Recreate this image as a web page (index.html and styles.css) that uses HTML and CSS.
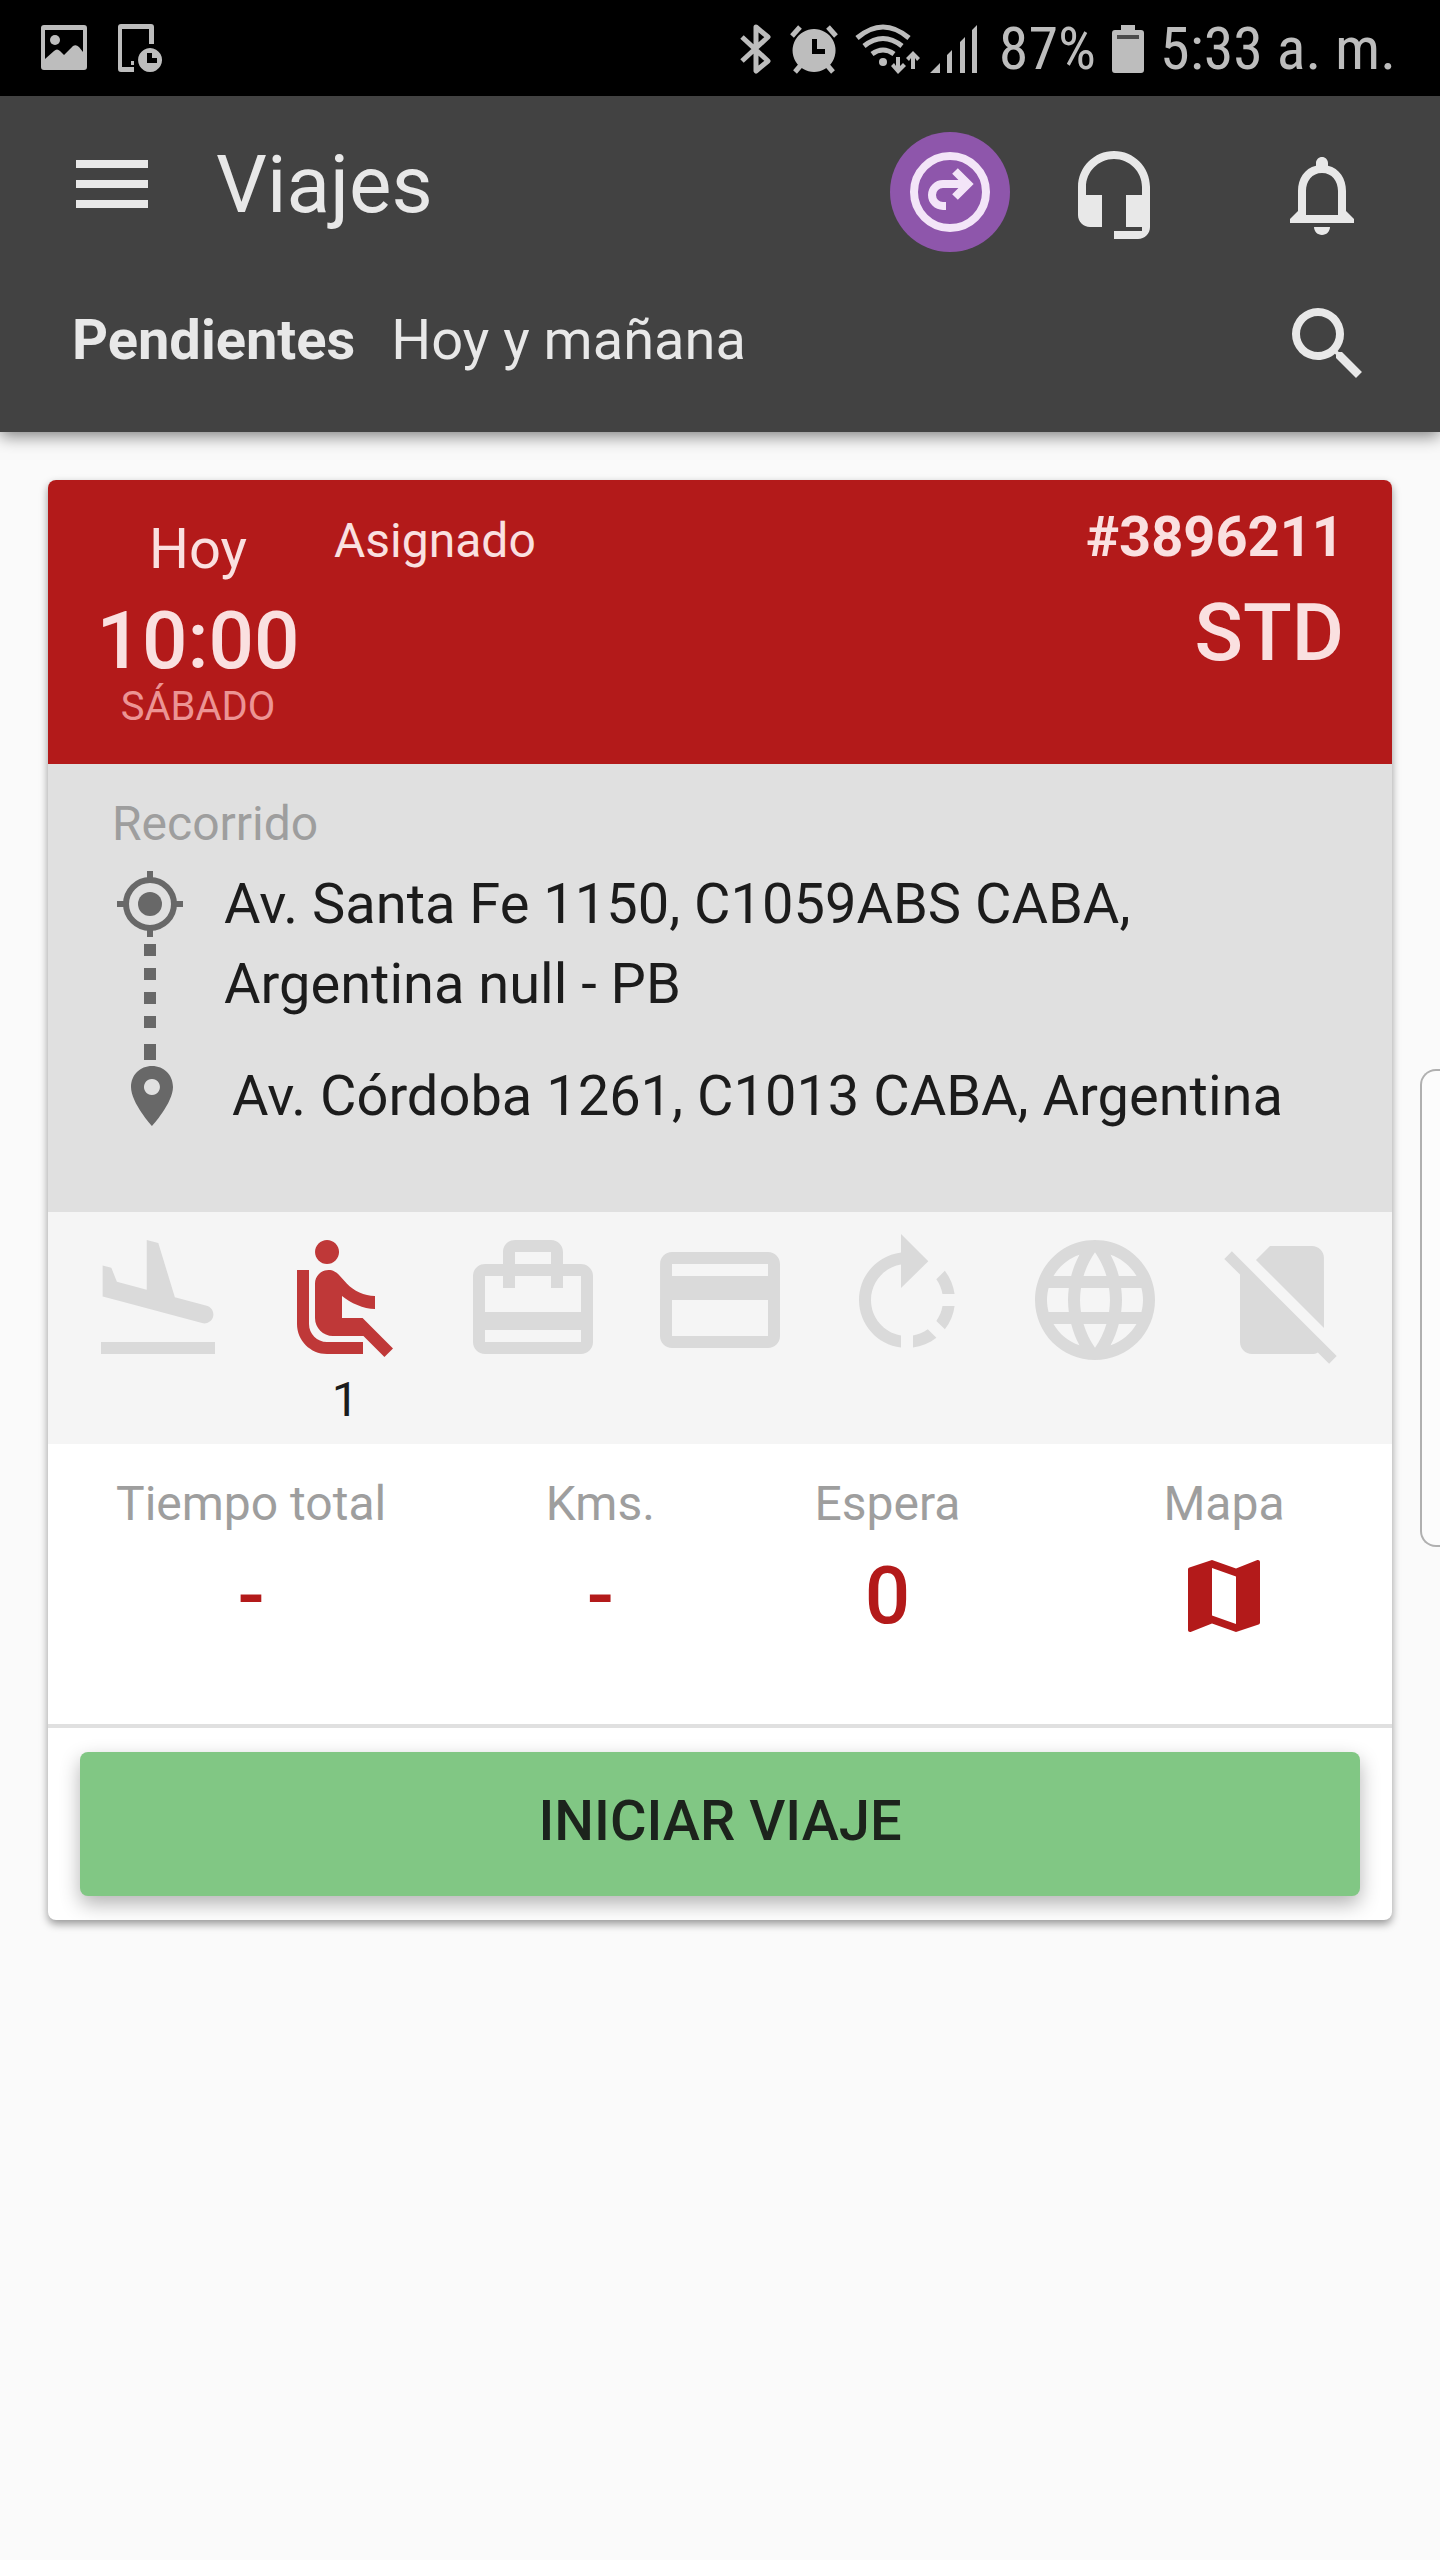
FILE: index.html
```html
<!DOCTYPE html>
<html lang="es">
<head>
<meta charset="utf-8">
<meta name="viewport" content="width=device-width, initial-scale=1">
<title>Viajes</title>
<link rel="stylesheet" href="styles.css">
</head>
<body>
<div class="status-bar">
  <div class="status-notes">
    <svg width="48" height="48" viewBox="0 0 48 48" aria-hidden="true"><path fill-rule="evenodd" d="M4 1h40q3 0 3 3v39q0 3-3 3H4q-3 0-3-3V4q0-3 3-3zm1 5v29l9-8q3-3 6 0l4 4 9-9q3-2 6 1l4 5V6z"/><circle cx="15" cy="16" r="5"/></svg>
    <svg width="48" height="50" viewBox="0 0 48 50" aria-hidden="true"><path d="M5 1h30q3 0 3 3v17h-5V6H6v38h12v5H5q-3 0-3-3V4q0-3 3-3zM15 38h3v4h-3z"/><path fill-rule="evenodd" d="M34 25a12 12 0 1 0 .1 0zm-3 5h5v5h5v5H31z"/></svg>
  </div>
  <div class="status-info">
    <svg width="34" height="52" viewBox="0 0 34 52" aria-hidden="true"><path fill="none" stroke="#bdbdbd" stroke-width="5" stroke-linejoin="round" d="M3 14l26 24-12 10V4l12 10L3 38"/></svg>
    <svg class="alarm" width="50" height="50" viewBox="0 0 50 50" aria-hidden="true"><path fill-rule="evenodd" d="M25 5a21.500 21.500 0 1 0 .1 0zm-2 10h5v10h8v5H23z"/><path d="M3 12L11 3M47 12L39 3M6 48l6-7M44 48l-6-7" stroke="#bdbdbd" stroke-width="5"/></svg>
    <svg class="wifi" width="66" height="50" viewBox="0 0 66 50" aria-hidden="true"><path fill="none" stroke="#bdbdbd" stroke-width="5" d="M2 14q26-22 52 0M9 22q19-15 38 0M17 30q11-8 22 0"/><circle cx="28" cy="38" r="4"/><path d="M41 33h4v9l3-3 3 3-8 8-7-8 3-3 2 3zM56 45V34l-2 3-3-3 7-7 7 7-3 3-2-3v11z"/></svg>
    <svg class="signal" width="50" height="50" viewBox="0 0 50 50" aria-hidden="true"><path d="M1 49l10-10v10zM18 49V31l5-5v23zM31 49V18l5-5v36zM43 49V6l5-5v48z"/></svg>
    <span>87%</span>
    <svg class="battery" width="32" height="50" viewBox="0 0 32 50" aria-hidden="true"><path d="M9 1h14v5h6q3 0 3 3v37q0 3-3 3H3q-3 0-3-3V9q0-3 3-3h6z"/><path fill="#4c4c4c" d="M5 11h22v4H5z"/></svg>
    <span>5:33 a. m.</span>
  </div>
</div>
<header class="toolbar">
  <div class="toolbar-row">
    <button class="icon-button" aria-label="Menú"><svg viewBox="0 0 24 24"><path d="M3 18h18v-2H3v2zm0-5h18v-2H3v2zm0-7v2h18V6H3z"/></svg></button>
    <h1>Viajes</h1>
    <div class="toolbar-actions">
      <button class="round-button" aria-label="Derivar"><svg viewBox="0 0 120 120"><g fill="none" stroke="#f3e5f8" stroke-width="8"><circle cx="60" cy="60" r="36"/><path d="M56 74h-3a11 11 0 0 1 0-22h24M65 39l13 13-13 13"/></g></svg></button>
      <button class="icon-button" aria-label="Soporte"><svg viewBox="0 0 24 24"><path d="M12 1c-4.97 0-9 4.03-9 9v7c0 1.66 1.34 3 3 3h3v-8H5v-2c0-3.87 3.13-7 7-7s7 3.13 7 7v2h-4v8h4v1h-7v2h6c1.66 0 3-1.34 3-3V10c0-4.97-4.03-9-9-9z"/></svg></button>
      <button class="icon-button bell" aria-label="Notificaciones"><svg viewBox="0 0 24 24"><path d="M12 22c1.1 0 2-.9 2-2h-4c0 1.1.9 2 2 2zm6-6v-5c0-3.07-1.63-5.64-4.5-6.32V4c0-.83-.67-1.5-1.5-1.5s-1.5.67-1.5 1.5v.68C7.64 5.36 6 7.92 6 11v5l-2 2v1h16v-1l-2-2zm-2 1H8v-6c0-2.48 1.51-4.5 4-4.5s4 2.02 4 4.5v6z"/></svg></button>
    </div>
  </div>
  <div class="filter-row">
    <p><strong>Pendientes</strong><span>Hoy y mañana</span></p>
    <button class="icon-button" aria-label="Buscar"><svg viewBox="0 0 24 24"><path d="M15.500 14h-.79l-.28-.27A6.471 6.471 0 0 0 16 9.500 6.500 6.500 0 1 0 9.500 16c1.610 0 3.090-.59 4.230-1.570l.27.28v.79l5 4.990L20.490 19l-4.990-5zm-6 0C7.010 14 5 11.990 5 9.500S7.010 5 9.500 5 14 7.010 14 9.500 11.990 14 9.500 14z"/></svg></button>
  </div>
</header>
<main>
  <article class="trip">
    <div class="trip-head">
      <div class="trip-when"><span>Hoy</span><time datetime="10:00">10:00</time><small>SÁBADO</small></div>
      <p class="trip-state">Asignado</p>
      <div class="trip-id"><strong>#3896211</strong><span>STD</span></div>
    </div>
    <section class="route">
      <h2>Recorrido</h2>
      <div class="route-body">
        <svg class="route-line" width="68" height="260" viewBox="0 0 68 260" aria-hidden="true"><circle cx="34" cy="34" r="24" fill="none" stroke="#686868" stroke-width="6"/><circle cx="34" cy="34" r="12"/><path d="M31 1h6v8h-6zM31 59h6v8h-6zM1 31h8v6H1zM59 31h8v6h-8zM28 74h12v12H28zM28 98h12v12H28zM28 122h12v12H28zM28 146h12v12H28zM28 174h12v16H28z"/><path fill-rule="evenodd" d="M36 196c-12 0-21 9-21 21 0 16 21 39 21 39s21-23 21-39c0-12-9-21-21-21zm0 13a8 8 0 1 1-.1 0z"/></svg>
        <div class="stops"><p>Av. Santa Fe 1150, C1059ABS CABA, Argentina null - PB</p><p class="stop-end">Av. Córdoba 1261, C1013 CABA, Argentina</p></div>
      </div>
    </section>
    <ul class="extras">
      <li><svg viewBox="0 0 24 24"><path d="M2.500 19h19v2h-19zm7.180-5.730l4.350 1.160 5.310 1.420c.8.210 1.620-.26 1.840-1.060.21-.8-.26-1.620-1.060-1.840l-5.310-1.420-2.760-9.020L10.120 2v8.280L5.150 8.950l-.93-2.320-1.450-.39v5.170l1.600.43 5.310 1.430z"/></svg></li>
      <li class="on"><svg viewBox="0 0 24 24"><path d="M7.590 5.410c-.78-.78-.78-2.050 0-2.830.78-.78 2.050-.78 2.830 0 .78.78.78 2.050 0 2.830-.79.79-2.050.79-2.830 0zM6 16V7H4v9c0 2.760 2.240 5 5 5h6v-2H9c-1.660 0-3-1.340-3-3zm14 4.070L14.930 15H11.500v-3.680c1.400 1.150 3.600 2.160 5.500 2.160v-2.160c-1.660.02-3.610-.87-4.670-2.040l-1.400-1.550c-.19-.21-.43-.38-.69-.5-.29-.14-.62-.23-.96-.23h-.03C8.010 7 7 8.010 7 9.250V15c0 1.660 1.340 3 3 3h5.070l3.500 3.500L20 20.070z"/></svg><span>1</span></li>
      <li><svg viewBox="0 0 24 24"><path d="M20 6h-3V4c0-1.110-.89-2-2-2H9c-1.110 0-2 .89-2 2v2H4c-1.110 0-2 .89-2 2v11c0 1.110.89 2 2 2h16c1.110 0 2-.89 2-2V8c0-1.110-.89-2-2-2zM9 4h6v2H9V4zm11 15H4v-2h16v2zm0-5H4V8h3v2h2V8h6v2h2V8h3v6z"/></svg></li>
      <li><svg viewBox="0 0 24 24"><path d="M20 4H4c-1.110 0-1.990.89-1.990 2L2 18c0 1.110.89 2 2 2h16c1.110 0 2-.89 2-2V6c0-1.110-.89-2-2-2zm0 14H4v-6h16v6zm0-10H4V6h16v2z"/></svg></li>
      <li><svg viewBox="0 0 24 24"><path d="M15.550 5.550L11 1v3.070C7.060 4.560 4 7.920 4 12s3.050 7.440 7 7.930v-2.020c-2.840-.48-5-2.940-5-5.910s2.160-5.430 5-5.910V10l4.550-4.450zM19.930 11c-.17-1.390-.72-2.730-1.620-3.890l-1.420 1.420c.54.75.88 1.600 1.020 2.470h2.020zM13 17.900v2.020c1.390-.17 2.740-.71 3.900-1.610l-1.440-1.440c-.75.54-1.590.89-2.460 1.030zm3.890-2.420l1.420 1.410c.9-1.160 1.450-2.500 1.620-3.890h-2.020c-.14.87-.48 1.720-1.020 2.480z"/></svg></li>
      <li><svg viewBox="0 0 24 24"><path d="M11.990 2C6.470 2 2 6.480 2 12s4.470 10 9.990 10C17.520 22 22 17.520 22 12S17.520 2 11.990 2zm6.930 6h-2.950c-.32-1.250-.78-2.450-1.380-3.560 1.840.63 3.370 1.910 4.330 3.560zM12 4.040c.83 1.200 1.480 2.530 1.910 3.960h-3.820c.43-1.430 1.080-2.760 1.910-3.960zM4.260 14C4.100 13.360 4 12.690 4 12s.1-1.360.26-2h3.380c-.08.66-.14 1.320-.14 2s.06 1.340.14 2H4.260zm.82 2h2.950c.32 1.250.78 2.450 1.380 3.560-1.840-.63-3.370-1.900-4.330-3.560zm2.950-8H5.080c.96-1.660 2.490-2.930 4.330-3.560C8.810 5.550 8.350 6.750 8.030 8zM12 19.960c-.83-1.200-1.480-2.530-1.910-3.960h3.820c-.43 1.430-1.080 2.760-1.910 3.960zM14.340 14H9.660c-.09-.66-.16-1.320-.16-2s.07-1.350.16-2h4.680c.09.65.16 1.320.16 2s-.07 1.340-.16 2zm.25 5.560c.6-1.110 1.060-2.310 1.380-3.560h2.950c-.96 1.650-2.490 2.930-4.330 3.560zM16.360 14c.08-.66.14-1.320.14-2s-.06-1.340-.14-2h3.380c.16.64.26 1.310.26 2s-.1 1.360-.26 2h-3.380z"/></svg></li>
      <li><svg viewBox="0 0 24 24"><path d="M18.990 5c0-1.100-.89-2-1.990-2h-7L7.660 5.340 19 16.680 18.990 5zM3.650 3.880L2.380 5.150 5 7.770V19c0 1.100.9 2 2 2h10.010c.35 0 .67-.1.96-.26l1.880 1.880 1.270-1.270L3.650 3.880z"/></svg></li>
    </ul>
    <dl class="stats">
      <div><dt>Tiempo total</dt><dd>-</dd></div>
      <div><dt>Kms.</dt><dd>-</dd></div>
      <div><dt>Espera</dt><dd>0</dd></div>
      <div class="map"><dt>Mapa</dt><dd><a href="#mapa" aria-label="Mapa"><svg viewBox="0 0 24 24"><path d="M20.500 3l-.16.03L15 5.100 9 3 3.360 4.900c-.21.07-.36.25-.36.48V20.500c0 .28.22.5.5.5l.16-.03L9 18.900l6 2.100 5.640-1.900c.21-.07.36-.25.36-.48V3.500c0-.28-.22-.5-.5-.5zM15 19l-6-2.110V5l6 2.110V19z"/></svg></a></dd></div>
    </dl>
    <div class="trip-action"><button class="start">INICIAR VIAJE</button></div>
  </article>
</main>
<div class="edge-handle"></div>
</body>
</html>
```
FILE: styles.css
```css
* { box-sizing: border-box; }
body { margin: 0; background: #fafafa; color: #1c1c1c; font: 400 56px/80px Roboto, sans-serif; }
h1, h2, p, ul, dl, dd { margin: 0; padding: 0; font-weight: 400; }
button { border: 0; padding: 0; background: none; font: inherit; color: inherit; cursor: pointer; }
svg { display: block; flex: none; fill: currentColor; }

.status-bar { height: 96px; padding: 0 44px 0 40px; display: flex; justify-content: space-between; align-items: center; background: #000; color: #bdbdbd; font-size: 60px; font-family: "Roboto Condensed", Roboto, sans-serif; }
.status-notes, .status-info { display: flex; align-items: center; }
.status-notes { gap: 28px; }
.status-info { padding-top: 2px; }
.alarm { margin-left: 16px; }
.wifi { margin-left: 16px; }
.signal { margin: 0 20px 0 8px; }
.battery { margin: 0 16px; }

.toolbar { position: relative; background: #424242; color: #e8e8e8; box-shadow: 0 4px 16px rgba(0, 0, 0, .5); padding: 36px 64px 40px; }
.toolbar-row, .filter-row, .toolbar-actions { display: flex; align-items: center; }
.toolbar-row { height: 120px; padding-right: 6px; }
.toolbar-row > .icon-button { margin-top: -16px; }
.toolbar h1 { font-size: 80px; margin: -14px 0 0 56px; }
.toolbar-actions { margin-left: auto; }
.toolbar-actions .icon-button { margin-top: 6px; }
.icon-button svg { width: 96px; height: 96px; }
.round-button { width: 120px; height: 120px; margin-right: 56px; border-radius: 50%; background: #8e56ab; }
.bell { margin-left: 112px; }
.filter-row { justify-content: space-between; align-items: flex-start; height: 96px; margin-top: 44px; padding-left: 8px; }
.filter-row p { display: flex; gap: 36px; padding-top: 4px; }

main { padding: 48px; }
.trip { background: #fff; border-radius: 8px; box-shadow: 0 4px 8px rgba(0, 0, 0, .4); overflow: hidden; }
.trip-head { min-height: 284px; display: flex; align-items: flex-start; padding: 29px 48px 40px 46px; background: #b31a1a; color: #fae0e0; }
.trip-when { width: 208px; display: flex; flex-direction: column; align-items: center; }
.trip-when time { font-size: 80px; font-weight: 500; line-height: 104px; }
.trip-when small { font-size: 40px; line-height: 28px; color: #ec9494; }
.trip-state { margin-left: 32px; font-size: 48px; line-height: 64px; }
.trip-id { margin-left: auto; display: flex; flex-direction: column; align-items: flex-end; }
.trip-id strong { line-height: 56px; }
.trip-id span { font-size: 80px; font-weight: 500; line-height: 136px; }

.route { background: #e0e0e0; padding: 28px 64px 76px; }
.route h2 { font-size: 48px; line-height: 64px; color: #9e9e9e; }
.route-body { display: flex; align-items: flex-start; gap: 40px; padding-left: 4px; }
.route-line { margin-top: 14px; fill: #686868; }
.stops { padding-top: 8px; }
.stop-end { margin-top: 32px; padding-left: 8px; }

.extras { min-height: 232px; display: grid; grid-template-columns: repeat(7, 1fr); padding: 16px; background: #f5f5f5; color: #dadada; list-style: none; font-size: 48px; line-height: 56px; }
.extras li { display: flex; flex-direction: column; align-items: center; }
.extras svg { width: 144px; height: 144px; }
.extras .on { color: #bf3838; }
.extras span { color: #1c1c1c; }

.stats { min-height: 280px; display: flex; justify-content: space-between; padding: 28px 64px 28px 68px; text-align: center; }
.stats dt { font-size: 48px; line-height: 64px; color: #9e9e9e; }
.stats dd { font-size: 80px; font-weight: 500; line-height: 96px; margin-top: 12px; color: #b31a1a; }
.stats .map { width: 208px; }
.stats a { display: inline-block; color: inherit; }
.stats a svg { width: 96px; height: 96px; }

.trip-action { border-top: 4px solid #e0e0e0; padding: 24px 32px; }
.start { display: block; width: 100%; height: 144px; padding-bottom: 6px; border-radius: 8px; background: #81c784; color: #1c231c; font-weight: 500; box-shadow: 0 8px 20px rgba(0, 0, 0, .3); }

.edge-handle { position: fixed; right: 0; top: 1069px; width: 20px; height: 478px; border: 2px solid #b0b0b0; border-right: 0; border-radius: 16px 0 0 16px; background: #fcfcfc; }
```
